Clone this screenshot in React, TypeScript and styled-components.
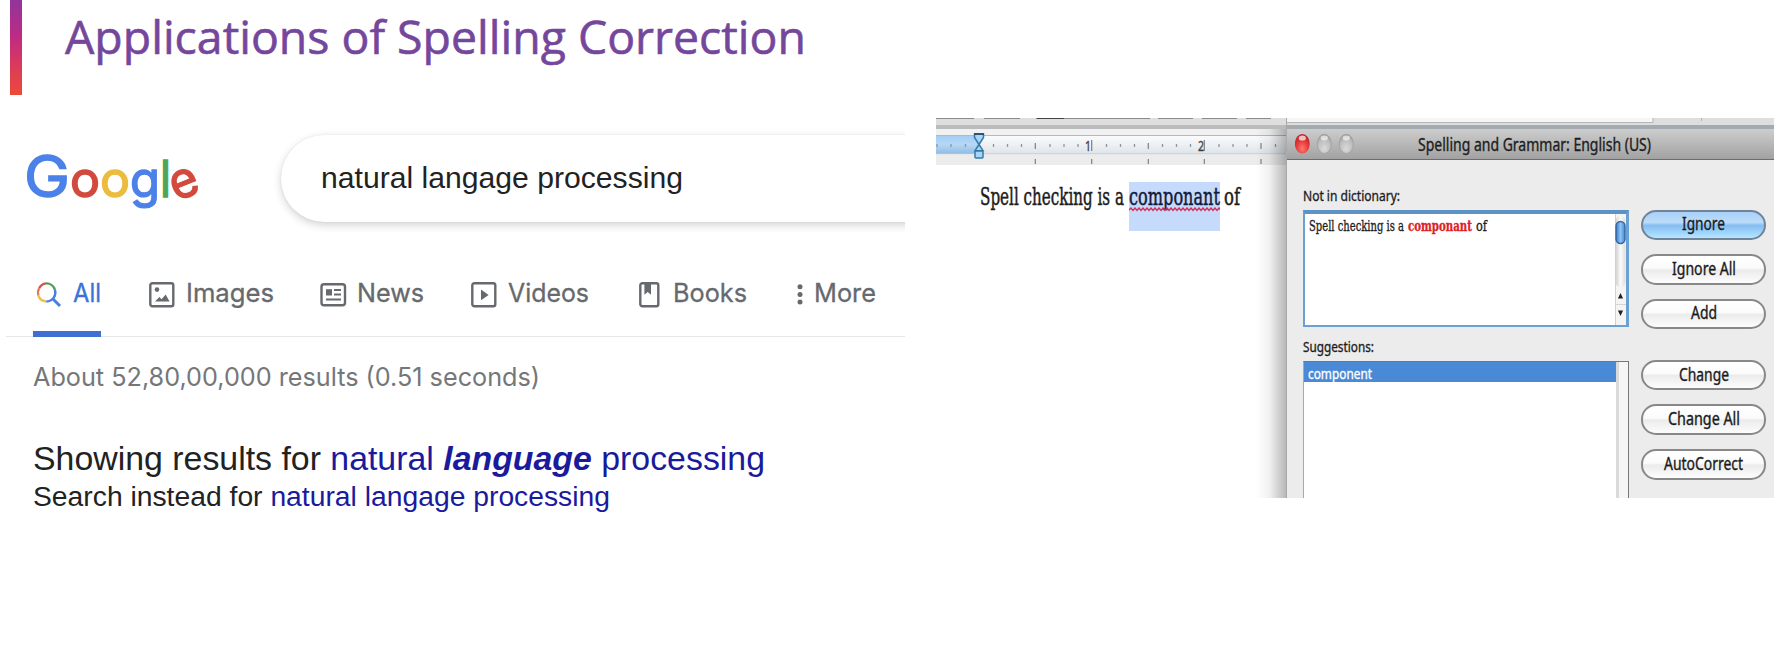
import React, { ReactNode, useLayoutEffect, useRef, useState } from "react";
import styled, { createGlobalStyle, css } from "styled-components";

const GlobalStyle = createGlobalStyle`
  * { box-sizing: border-box; }
  body { margin: 0; background: #fff; }
`;

const arial = `"Liberation Sans", Arial, sans-serif`;
const product = `Inter, Roboto, sans-serif`;
const lucida = `"Noto Sans", "Open Sans", sans-serif`;
const cambria = `"DejaVu Serif", "Liberation Serif", serif`;

/* Text condensed or widened to a given width */

const FitBox = styled.span<{ $width: number }>`
  display: block;
  flex: none;
  width: ${(p) => p.$width}px;
  white-space: pre;
`;

const FitInner = styled.span`
  display: inline-block;
  transform-origin: 0 50%;
`;

function Fit({ width, children }: { width: number; children: ReactNode }) {
  const ref = useRef<HTMLSpanElement>(null);
  const [scale, setScale] = useState(1);
  useLayoutEffect(() => {
    if (ref.current) setScale(width / parseFloat(getComputedStyle(ref.current).width));
  }, [width]);
  return (
    <FitBox $width={width}>
      <FitInner ref={ref} style={{ transform: `scaleX(${scale})` }}>
        {children}
      </FitInner>
    </FitBox>
  );
}

/* Slide */

const Slide = styled.main`
  width: 1783px;
  height: 669px;
  overflow: hidden;
  background: #fff;
`;

const SlideHeader = styled.header`
  display: flex;
  height: 95px;
  padding-left: 10px;
`;

const Accent = styled.div`
  width: 12px;
  height: 95px;
  background: linear-gradient(#93359a 0%, #bb2a86 36%, #d93a5c 68%, #ee4a38 100%);
`;

const Title = styled.h1`
  margin: 6px 0 0 43px;
  font: 400 46px/60px "Open Sans", "Noto Sans", sans-serif;
  -webkit-text-stroke: 0.6px #75479c;
  color: #75479c;
`;

const Columns = styled.div`
  display: flex;
  align-items: flex-start;
  padding-left: 6px;
`;

/* Search page */

const SearchPage = styled.section`
  width: 899px;
  height: 440px;
  overflow: hidden;
`;

const SearchRow = styled.div`
  display: flex;
  padding: 40px 0 0 18px;
`;

const Logo = styled.div`
  display: flex;
  align-items: baseline;
  flex: none;
  width: 257px;
  height: 87px;
  padding-top: 6px;
  font-family: ${product};
`;

const LogoLetter = styled.span<{ $color: string; $capital?: boolean; $tilt?: boolean }>`
  font-size: ${(p) => (p.$capital ? 58 : 50)}px;
  line-height: 70px;
  color: ${(p) => p.$color};
  -webkit-text-stroke: 1.4px ${(p) => p.$color};
  ${(p) =>
    p.$tilt &&
    css`
      transform: rotate(-22deg);
      transform-origin: 50% 60%;
    `}
`;

const SearchBox = styled.div`
  display: flex;
  align-items: center;
  flex: none;
  width: 700px;
  height: 87px;
  padding: 0 0 2px 40px;
  border-radius: 44px;
  background: #fff;
  box-shadow: 0 3px 9px rgba(32, 33, 36, 0.2), 0 0 2px rgba(32, 33, 36, 0.08);
  font: 400 30px/40px ${arial};
  color: #222;
`;

const Tabs = styled.nav`
  display: flex;
  height: 64px;
  margin-top: 51px;
  padding-left: 27px;
  border-bottom: 1.5px solid #e6e7e9;
  font: 400 25.5px/40px ${product};
`;

const Tab = styled.div<{ $before: number; $gap: number; $active?: boolean }>`
  display: flex;
  gap: ${(p) => p.$gap}px;
  height: 64px;
  margin-left: ${(p) => p.$before}px;
  color: ${(p) => (p.$active ? "#3c72d8" : "#66696d")};
  -webkit-text-stroke: 0.3px currentColor;
  ${(p) =>
    p.$active &&
    css`
      padding-left: 2px;
      border-bottom: 6px solid #3f6fd3;
    `}
  svg {
    flex: none;
    margin-top: 8px;
  }
`;

const Stats = styled.p`
  margin: 20px 0 0 27px;
  font: 400 25.6px/40px ${product};
  color: #74777a;
`;

const Showing = styled.p`
  margin: 41px 0 0 27px;
  font: 400 33.8px/40px ${arial};
  color: #222;
`;

const Instead = styled.p`
  margin: 0 0 0 27px;
  font: 400 28.2px/36px ${arial};
  color: #222;
`;

const Query = styled.span`
  color: #1a1a9c;
`;

const Corrected = styled.b`
  font-style: italic;
`;

/* Word processor */

const Screenshot = styled.section`
  display: flex;
  width: 838px;
  height: 380px;
  margin: 23px 0 0 31px;
  overflow: hidden;
`;

const DocumentPane = styled.div`
  position: relative;
  display: flex;
  flex-direction: column;
  width: 350px;
  background: #fff;
`;

const ToolbarEdge = styled.svg`
  display: block;
  flex: none;
  background: #dedede;
`;

const RulerSvg = styled.svg`
  display: block;
  flex: none;
`;

const PageShade = styled.div`
  position: absolute;
  top: 11px;
  right: 0;
  bottom: 0;
  width: 30px;
  background: linear-gradient(90deg, transparent, rgba(0, 0, 0, 0.06) 45%, rgba(0, 0, 0, 0.28));
`;

const DocLine = styled.div`
  display: flex;
  margin: 17px 0 0 44px;
  font: 400 23.5px/30px ${cambria};
  -webkit-text-stroke: 0.5px currentColor;
  color: #1c1c1c;
`;

const DocText = styled.div`
  height: 49px;
`;

const Selected = styled.div`
  position: relative;
  height: 49px;
  margin: 0 4px 0 5px;
  background: #c6dbfb;
  color: #14193a;
`;

const Squiggle = styled.svg`
  position: absolute;
  left: 0;
  top: 25px;
`;

const Dialog = styled.div`
  display: flex;
  flex-direction: column;
  width: 488px;
  background: #ececec;
  border-left: 1px solid #a9a9a9;
  font-family: ${lucida};
  -webkit-text-stroke: 0.35px currentColor;
  color: #1d1d1d;
`;

const TitleBar = styled.div`
  display: flex;
  align-items: center;
  height: 31px;
  padding-left: 8px;
  border-bottom: 1.5px solid #6d6d6d;
  background: linear-gradient(#cdcdcd, #a2a2a2);
  font-size: 17.6px;
  line-height: 28px;
`;

const Lights = styled.svg`
  flex: none;
  width: 123px;
  height: 30px;
`;

const DialogBody = styled.div`
  display: flex;
  flex: 1;
  gap: 12px;
  padding: 0 8px 0 16px;
`;

const Fields = styled.div`
  display: flex;
  flex-direction: column;
  width: 326px;
`;

const FieldLabel = styled.div<{ $top: number }>`
  margin-top: ${(p) => p.$top}px;
  height: 25px;
  font-size: 15px;
  line-height: 24px;
`;

const Misspelled = styled.div`
  display: flex;
  justify-content: space-between;
  height: 117px;
  margin-top: 2px;
  border: solid #6ba0d2;
  border-width: 4px 3px 2px 2px;
  border-top-color: #5d92c4;
  background: #fff;
`;

const Sentence = styled.div`
  display: flex;
  gap: 4px;
  padding-left: 4px;
  font: 400 15px/25px ${cambria};
`;

const Wrong = styled.b`
  color: #dc2227;
`;

const Suggestions = styled.div`
  display: flex;
  flex: 1;
  margin-top: 2px;
  border: solid #777;
  border-width: 1px 1.5px 0 1px;
  border-left-color: #aaa;
  background: #fff;
`;

const SuggestionList = styled.div`
  flex: 1;
`;

const Suggestion = styled.div`
  height: 20px;
  padding-left: 4px;
  background: #4a89d6;
  font-size: 14.5px;
  line-height: 22px;
  color: #fff;
`;

const EmptyTrack = styled.div`
  width: 12px;
  border-left: 3px solid #dadada;
  background: #f6f6f6;
`;

const Buttons = styled.div`
  display: flex;
  flex-direction: column;
  gap: 14px;
  padding-top: 49.5px;
`;

const PushButton = styled.button<{ $primary?: boolean; $apart?: boolean }>`
  display: flex;
  justify-content: center;
  align-items: center;
  width: 125px;
  height: 30.6px;
  margin: ${(p) => (p.$apart ? "16.5px" : "0")} 0 0;
  padding: 0 0 1px;
  border: 2px solid ${(p) => (p.$primary ? "#6f8399" : "#888")};
  border-radius: 15px;
  background: ${(p) =>
    p.$primary
      ? "linear-gradient(#a9d0f7 0%, #bcdcfb 40%, #85bdf3 52%, #a5d9fd 85%, #b8e6ff 100%)"
      : "linear-gradient(#fff 0%, #fbfbfb 45%, #ebebeb 52%, #fdfdfd 100%)"};
  font: 400 17.2px/26px ${lucida};
  -webkit-text-stroke: 0.35px currentColor;
  color: #1a1a1a;
`;

const grey = "#66696d";

function SearchIcon() {
  return (
    <svg width="27" height="28" viewBox="0 0 27 28" fill="none" strokeWidth="2.4">
      <path d="M4.2 7.2A9 9 0 0 1 11 2.4" stroke="#d9534a" />
      <path d="M11 2.4A9 9 0 0 1 20 9" stroke="#4c9f57" />
      <path d="M3.2 14.2A9 9 0 0 1 4.2 7.2" stroke="#e2795a" />
      <path d="M11.4 20.5A9 9 0 0 1 3.2 14.2" stroke="#edc04a" />
      <path d="M20 9A9 9 0 0 1 11.4 20.5" stroke="#4a7fe0" />
      <path d="M17.5 17.5L25 25" stroke="#4a7fe0" strokeWidth="3" />
    </svg>
  );
}

function ImagesIcon() {
  return (
    <svg width="26" height="27" viewBox="0 0 26 27">
      <rect x="1.3" y="2.3" width="23" height="23" rx="2" fill="none" stroke={grey} strokeWidth="2.4" />
      <circle cx="8" cy="8.6" r="2.3" fill={grey} />
      <path d="M6 20.5l4.4-4.5 2.2 2.2 4-4.6 4 6.9z" fill={grey} />
    </svg>
  );
}

function NewsIcon() {
  return (
    <svg width="27" height="27" viewBox="0 0 27 27">
      <rect x="1.5" y="3.3" width="23.5" height="21" rx="2.5" fill="none" stroke={grey} strokeWidth="2.4" />
      <path d="M6 8.2h6v6.3H6z" fill={grey} />
      <path d="M14 9h7M14 13.4h7M6 18.4h15" stroke={grey} strokeWidth="2" />
    </svg>
  );
}

function VideosIcon() {
  return (
    <svg width="26" height="27" viewBox="0 0 26 27">
      <rect x="1.3" y="2.3" width="23" height="23" rx="2" fill="none" stroke={grey} strokeWidth="2.4" />
      <path d="M10 8.6l7.6 5.3L10 19.2z" fill={grey} />
    </svg>
  );
}

function BooksIcon() {
  return (
    <svg width="21" height="27" viewBox="0 0 21 27">
      <rect x="1.3" y="2.3" width="18" height="23" rx="2" fill="none" stroke={grey} strokeWidth="2.4" />
      <path d="M5.4 2.5h6.6v11.2l-3.3-2.6-3.3 2.6z" fill={grey} />
    </svg>
  );
}

function MoreIcon() {
  return (
    <svg width="6" height="27" viewBox="0 0 6 27" fill={grey}>
      <circle cx="3" cy="5.8" r="2.5" />
      <circle cx="3" cy="13.4" r="2.5" />
      <circle cx="3" cy="21" r="2.5" />
    </svg>
  );
}

const halves = [99.3, 155.7, 212.3, 268.3, 325];
const eighths = [1, 15, 29.5, 57.5, 71.5, 85.5, 114, 128, 142, 170.5, 184.5, 198.5, 226.5, 240.5, 254.5, 283, 297, 311, 339.5];

function Ruler() {
  return (
    <RulerSvg width="350" height="36" viewBox="0 0 350 36">
      <defs>
        <linearGradient id="scale" x1="0" y1="0" x2="0" y2="1">
          <stop offset="0" stopColor="#fbfcfd" />
          <stop offset="0.5" stopColor="#eef1f4" />
          <stop offset="1" stopColor="#dde3e9" />
        </linearGradient>
        <linearGradient id="margin" x1="0" y1="0" x2="0" y2="1">
          <stop offset="0" stopColor="#a3cdf2" />
          <stop offset="0.5" stopColor="#b5d8f7" />
          <stop offset="1" stopColor="#8fbbe2" />
        </linearGradient>
      </defs>
      <rect width="350" height="6" fill="#f1f1f1" />
      <rect y="6" width="350" height="19" fill="url(#scale)" />
      <rect y="6" width="43" height="19" fill="url(#margin)" />
      <path d="M0 6.5h350" stroke="#b4b9bd" />
      <path d="M0 25h350" stroke="#c3c6c9" />
      <rect y="25.5" width="350" height="10.5" fill="#ececec" />
      {eighths.map((x) => (
        <path key={x} d={`M${x} 15v3`} stroke="#8f969c" strokeWidth="1.3" />
      ))}
      {halves.map((x, i) => (
        <g key={x} stroke="#7b8085" strokeWidth="1.2">
          <path d={i % 2 ? `M${x} 11v11` : `M${x} 14v6`} />
          <path d={`M${x} 30v5`} />
        </g>
      ))}
      <g fontFamily="Noto Sans, sans-serif" fontSize="14" fill="#3a3f44" stroke="#3a3f44" strokeWidth="0.3">
        <text x="149" y="21.5" textLength="6" lengthAdjust="spacingAndGlyphs">1</text>
        <text x="262" y="21.5" textLength="6" lengthAdjust="spacingAndGlyphs">2</text>
      </g>
      <g fill="#a9d5f8" stroke="#3579a8" strokeWidth="1.5">
        <path d="M38.5 5h9v3.5L43 15.5l-4.5-7z" />
        <path d="M43 15.5l4 6.2h-8z" />
        <rect x="39" y="22" width="8" height="7" rx="1" />
      </g>
      <path d="M38 5h10" stroke="#1d4668" strokeWidth="1.6" />
    </RulerSvg>
  );
}

function ScrollBar() {
  return (
    <svg width="11" height="111" viewBox="0 0 11 111">
      <defs>
        <linearGradient id="track" x1="0" y1="0" x2="1" y2="0">
          <stop offset="0" stopColor="#cfcfcf" />
          <stop offset="0.5" stopColor="#fafafa" />
          <stop offset="1" stopColor="#ddd" />
        </linearGradient>
        <linearGradient id="thumb" x1="0" y1="0" x2="1" y2="0">
          <stop offset="0" stopColor="#3b78bd" />
          <stop offset="0.5" stopColor="#8ec4f6" />
          <stop offset="1" stopColor="#4a86c8" />
        </linearGradient>
      </defs>
      <rect width="11" height="111" fill="#f4f4f4" />
      <path d="M.5 0v111" stroke="#d0d0d0" />
      <rect x=".5" y="2" width="10" height="71" rx="5" fill="url(#track)" />
      <rect x="1" y="7.5" width="9" height="22" rx="4.5" fill="url(#thumb)" stroke="#2f68a8" strokeWidth="1.4" />
      <path d="M0 90.5h11" stroke="#d5d5d5" />
      <path d="M5.5 79l2.6 5.600H2.900zM5.500 102l2.600-5.600H2.900z" fill="#222" />
    </svg>
  );
}

const squiggle = "M0 3" + Array.from({ length: 23 }, (_, i) => `L${i * 4 + 2} 1L${i * 4 + 4} 3.4`).join("");

export default function App() {
  return (
    <>
      <GlobalStyle />
      <Slide>
        <SlideHeader>
          <Accent />
          <Title>
            <Fit width={741}>Applications of Spelling Correction</Fit>
          </Title>
        </SlideHeader>
        <Columns>
          <SearchPage>
            <SearchRow>
              <Logo>
                <LogoLetter $color="#4b81e8" $capital>
                  <Fit width={46}>G</Fit>
                </LogoLetter>
                <LogoLetter $color="#d24a3f">
                  <Fit width={30}>o</Fit>
                </LogoLetter>
                <LogoLetter $color="#ecbc3e">
                  <Fit width={30}>o</Fit>
                </LogoLetter>
                <LogoLetter $color="#4b81e8">
                  <Fit width={30}>g</Fit>
                </LogoLetter>
                <LogoLetter $color="#4fa45a">
                  <Fit width={11}>l</Fit>
                </LogoLetter>
                <LogoLetter $color="#d24a3f" $tilt>
                  <Fit width={28}>e</Fit>
                </LogoLetter>
              </Logo>
              <SearchBox>
                <Fit width={362}>natural langage processing</Fit>
              </SearchBox>
            </SearchRow>
            <Tabs>
              <Tab $before={0} $gap={11} $active>
                <SearchIcon />
                <Fit width={28}>All</Fit>
              </Tab>
              <Tab $before={48} $gap={11}>
                <ImagesIcon />
                <Fit width={88}>Images</Fit>
              </Tab>
              <Tab $before={46} $gap={10}>
                <NewsIcon />
                <Fit width={67}>News</Fit>
              </Tab>
              <Tab $before={47} $gap={11}>
                <VideosIcon />
                <Fit width={81}>Videos</Fit>
              </Tab>
              <Tab $before={50} $gap={13}>
                <BooksIcon />
                <Fit width={74}>Books</Fit>
              </Tab>
              <Tab $before={50} $gap={11}>
                <MoreIcon />
                <Fit width={62}>More</Fit>
              </Tab>
            </Tabs>
            <Stats>
              <Fit width={507}>About 52,80,00,000 results (0.51 seconds)</Fit>
            </Stats>
            <Showing>
              <Fit width={732}>
                Showing results for{" "}
                <Query>
                  natural <Corrected>language</Corrected> processing
                </Query>
              </Fit>
            </Showing>
            <Instead>
              <Fit width={577}>
                Search instead for <Query>natural langage processing</Query>
              </Fit>
            </Instead>
          </SearchPage>
          <Screenshot>
            <DocumentPane>
              <ToolbarEdge width="350" height="11">
                <path d="M0 .5h38M48 .5h36M100 .5h114M222 .5h35M266 .5h35M310 .5h25" stroke="#8b8b8b" />
                <path d="M101 .5h27" stroke="#444" />
                <path d="M0 9h350" stroke="#b9bbbd" strokeWidth="4" />
              </ToolbarEdge>
              <Ruler />
              <DocLine>
                <DocText>
                  <Fit width={144}>Spell checking is a</Fit>
                </DocText>
                <Selected>
                  <Fit width={91}>componant</Fit>
                  <Squiggle width="91" height="5">
                    <path d={squiggle} fill="none" stroke="#d2305c" strokeWidth="1.4" />
                  </Squiggle>
                </Selected>
                <DocText>
                  <Fit width={16}>of</Fit>
                </DocText>
              </DocLine>
              <PageShade />
            </DocumentPane>
            <Dialog>
              <ToolbarEdge width="487" height="11">
                <path d="M0 0h366v5H0z" fill="#f6f6f6" />
                <path d="M366 0v4.5H0M414.500 0v3" stroke="#b5b5b5" fill="none" />
                <path d="M0 9h487" stroke="#a3abb1" strokeWidth="4" />
              </ToolbarEdge>
              <TitleBar>
                <Lights viewBox="0 0 123 30">
                  <defs>
                    <radialGradient id="red" cx="0.5" cy="0.75" r="0.8">
                      <stop offset="0" stopColor="#ff7a6e" />
                      <stop offset="0.5" stopColor="#e63a3a" />
                      <stop offset="1" stopColor="#a81f24" />
                    </radialGradient>
                    <radialGradient id="off" cx="0.5" cy="0.75" r="0.8">
                      <stop offset="0" stopColor="#dadada" />
                      <stop offset="0.6" stopColor="#bdbdbd" />
                      <stop offset="1" stopColor="#909090" />
                    </radialGradient>
                  </defs>
                  <ellipse cx="7.3" cy="14.8" rx="7.4" ry="9.8" fill="url(#red)" />
                  <ellipse cx="7.3" cy="9" rx="3.6" ry="2.6" fill="#fff" opacity="0.7" />
                  <ellipse cx="29.3" cy="14.8" rx="7.1" ry="9.6" fill="url(#off)" stroke="#999" strokeWidth="0.6" />
                  <ellipse cx="29.3" cy="9" rx="3.6" ry="2.4" fill="#fff" opacity="0.6" />
                  <ellipse cx="51.3" cy="14.8" rx="7.1" ry="9.6" fill="url(#off)" stroke="#999" strokeWidth="0.6" />
                  <ellipse cx="51.3" cy="9" rx="3.6" ry="2.4" fill="#fff" opacity="0.6" />
                </Lights>
                <Fit width={233}>Spelling and Grammar: English (US)</Fit>
              </TitleBar>
              <DialogBody>
                <Fields>
                  <FieldLabel $top={23}>
                    <Fit width={97}>Not in dictionary:</Fit>
                  </FieldLabel>
                  <Misspelled>
                    <Sentence>
                      <Fit width={95}>Spell checking is a</Fit>
                      <Wrong>
                        <Fit width={64}>componant</Fit>
                      </Wrong>
                      <Fit width={11}>of</Fit>
                    </Sentence>
                    <ScrollBar />
                  </Misspelled>
                  <FieldLabel $top={7}>
                    <Fit width={71}>Suggestions:</Fit>
                  </FieldLabel>
                  <Suggestions>
                    <SuggestionList>
                      <Suggestion>
                        <Fit width={64}>component</Fit>
                      </Suggestion>
                    </SuggestionList>
                    <EmptyTrack />
                  </Suggestions>
                </Fields>
                <Buttons>
                  <PushButton $primary>
                    <Fit width={43}>Ignore</Fit>
                  </PushButton>
                  <PushButton>
                    <Fit width={64}>Ignore All</Fit>
                  </PushButton>
                  <PushButton>
                    <Fit width={26}>Add</Fit>
                  </PushButton>
                  <PushButton $apart>
                    <Fit width={50}>Change</Fit>
                  </PushButton>
                  <PushButton>
                    <Fit width={72}>Change All</Fit>
                  </PushButton>
                  <PushButton>
                    <Fit width={79}>AutoCorrect</Fit>
                  </PushButton>
                </Buttons>
              </DialogBody>
            </Dialog>
          </Screenshot>
        </Columns>
      </Slide>
    </>
  );
}
